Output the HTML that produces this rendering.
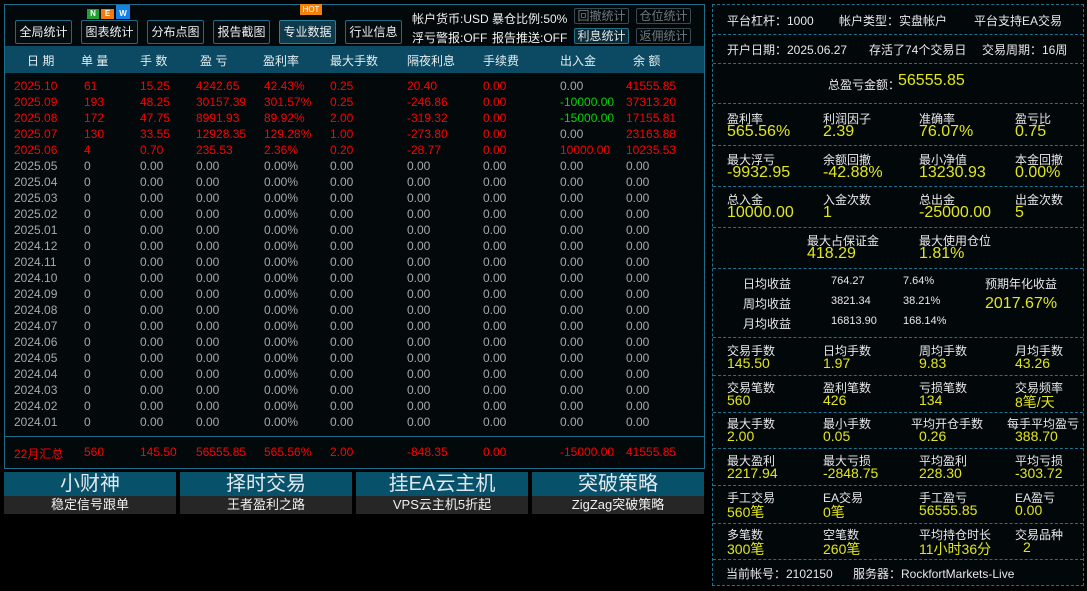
<!DOCTYPE html>
<html><head><meta charset="utf-8"><style>
*{margin:0;padding:0;box-sizing:border-box}
body{width:1087px;height:591px;background:#000;font-family:"Liberation Sans","Noto Sans CJK SC",sans-serif;font-size:12px;color:#c8c8c8;position:relative;overflow:hidden}
.a{position:absolute;white-space:nowrap}
#lp{position:absolute;left:4px;top:4px;width:701px;height:465px;border:1px solid #1c6f8c;background:#03080b}
.btn{position:absolute;top:20px;height:24px;width:57px;border:1px solid #1d6b86;border-radius:2px;color:#f0f0f0;font-size:12px;text-align:center;line-height:22px;background:#050c10}
.sb{position:absolute;height:16px;width:55px;border:1px solid #3a4a52;border-radius:2px;color:#6d7a80;font-size:12px;text-align:center;line-height:14px}
#hd{position:absolute;left:5px;top:46px;width:699px;height:27px;background:#0b4a62}
#hd span{position:absolute;top:6px;color:#e6eef2;font-size:12px}
.r{position:absolute;left:0;height:16px;width:700px;font-size:12px;color:#a9a9a9}
.r span{position:absolute;top:0}
.red{color:#f00 !important}.red span{color:#f00}
.g{color:#00d800 !important}.gy{color:#a9a9a9 !important}
.c0{left:14px}.c1{left:84px}.c2{left:140px}.c3{left:196px}.c4{left:264px}.c5{left:330px}.c6{left:407px}.c7{left:483px}.c8{left:560px}.c9{left:626px}
.bn{position:absolute;top:472px;width:172px;height:42px}
.bn .t{height:24px;background:#07516b;color:#dfe8ec;font-size:20px;text-align:center;line-height:24px}
.bn .b{height:18px;background:#262626;color:#f0f0f0;font-size:13px;text-align:center;line-height:18px}
#rp{position:absolute;left:712px;top:4px;width:372px;height:582px;border:1px dashed #1a7390;background:#02070a}
.ln{position:absolute;left:0;width:370px;border-top:1px dashed #1a7390}
#rp .a{color:#e8e8e8;font-size:12px}
#rp .v{color:#e2e61a;font-size:16px}
</style></head><body>
<div id="lp"></div>
<div class="btn" style="left:15px">全局统计</div>
<div class="btn" style="left:81px">图表统计</div>
<div class="btn" style="left:147px">分布点图</div>
<div class="btn" style="left:213px">报告截图</div>
<div class="btn" style="left:279px;background:#0e3a4c;border-color:#2a7f9c">专业数据</div>
<div class="btn" style="left:345px">行业信息</div>
<div class="a" style="left:87px;top:9px;width:12px;height:10px;background:#22a033;color:#fff;font-size:8px;text-align:center;line-height:10px;font-weight:bold">N</div>
<div class="a" style="left:101px;top:9px;width:13px;height:10px;background:#f07a10;color:#fff;font-size:8px;text-align:center;line-height:10px;font-weight:bold">E</div>
<div class="a" style="left:116px;top:5px;width:14px;height:14px;background:#1580e8;color:#fff;font-size:8px;text-align:center;line-height:18px;font-weight:bold">W</div>
<div class="a" style="left:300px;top:4px;width:22px;height:11px;background:#f0820a;color:#fff;font-size:8px;text-align:center;line-height:11px">HOT</div>
<div class="a" style="left:412px;top:10px;color:#f0f0f0">帐户货币:USD</div>
<div class="a" style="left:492px;top:10px;color:#f0f0f0">暴仓比例:50%</div>
<div class="a" style="left:412px;top:29px;color:#f0f0f0">浮亏警报:OFF</div>
<div class="a" style="left:492px;top:29px;color:#f0f0f0">报告推送:OFF</div>
<div class="sb" style="left:574px;top:8px">回撤统计</div>
<div class="sb" style="left:636px;top:8px">仓位统计</div>
<div class="sb" style="left:574px;top:28px;color:#e0e8ec;border-color:#2a6f88;background:#0a2a36">利息统计</div>
<div class="sb" style="left:636px;top:28px">返佣统计</div>
<div id="hd"><span style="left:22px">日 期</span><span style="left:76px">单 量</span><span style="left:135px">手 数</span><span style="left:195px">盈 亏</span><span style="left:258px">盈利率</span><span style="left:325px">最大手数</span><span style="left:402px">隔夜利息</span><span style="left:478px">手续费</span><span style="left:555px">出入金</span><span style="left:628px">余 额</span></div>

<div class="r red" style="top:79px"><span class="c0">2025.10</span><span class="c1">61</span><span class="c2">15.25</span><span class="c3">4242.65</span><span class="c4">42.43%</span><span class="c5">0.25</span><span class="c6">20.40</span><span class="c7">0.00</span><span class="c8 gy">0.00</span><span class="c9">41555.85</span></div>
<div class="r red" style="top:95px"><span class="c0">2025.09</span><span class="c1">193</span><span class="c2">48.25</span><span class="c3">30157.39</span><span class="c4">301.57%</span><span class="c5">0.25</span><span class="c6">-246.86</span><span class="c7">0.00</span><span class="c8 g">-10000.00</span><span class="c9">37313.20</span></div>
<div class="r red" style="top:111px"><span class="c0">2025.08</span><span class="c1">172</span><span class="c2">47.75</span><span class="c3">8991.93</span><span class="c4">89.92%</span><span class="c5">2.00</span><span class="c6">-319.32</span><span class="c7">0.00</span><span class="c8 g">-15000.00</span><span class="c9">17155.81</span></div>
<div class="r red" style="top:127px"><span class="c0">2025.07</span><span class="c1">130</span><span class="c2">33.55</span><span class="c3">12928.35</span><span class="c4">129.28%</span><span class="c5">1.00</span><span class="c6">-273.80</span><span class="c7">0.00</span><span class="c8 gy">0.00</span><span class="c9">23163.88</span></div>
<div class="r red" style="top:143px"><span class="c0">2025.06</span><span class="c1">4</span><span class="c2">0.70</span><span class="c3">235.53</span><span class="c4">2.36%</span><span class="c5">0.20</span><span class="c6">-28.77</span><span class="c7">0.00</span><span class="c8">10000.00</span><span class="c9">10235.53</span></div>
<div class="r" style="top:159px"><span class="c0">2025.05</span><span class="c1">0</span><span class="c2">0.00</span><span class="c3">0.00</span><span class="c4">0.00%</span><span class="c5">0.00</span><span class="c6">0.00</span><span class="c7">0.00</span><span class="c8">0.00</span><span class="c9">0.00</span></div>
<div class="r" style="top:175px"><span class="c0">2025.04</span><span class="c1">0</span><span class="c2">0.00</span><span class="c3">0.00</span><span class="c4">0.00%</span><span class="c5">0.00</span><span class="c6">0.00</span><span class="c7">0.00</span><span class="c8">0.00</span><span class="c9">0.00</span></div>
<div class="r" style="top:191px"><span class="c0">2025.03</span><span class="c1">0</span><span class="c2">0.00</span><span class="c3">0.00</span><span class="c4">0.00%</span><span class="c5">0.00</span><span class="c6">0.00</span><span class="c7">0.00</span><span class="c8">0.00</span><span class="c9">0.00</span></div>
<div class="r" style="top:207px"><span class="c0">2025.02</span><span class="c1">0</span><span class="c2">0.00</span><span class="c3">0.00</span><span class="c4">0.00%</span><span class="c5">0.00</span><span class="c6">0.00</span><span class="c7">0.00</span><span class="c8">0.00</span><span class="c9">0.00</span></div>
<div class="r" style="top:223px"><span class="c0">2025.01</span><span class="c1">0</span><span class="c2">0.00</span><span class="c3">0.00</span><span class="c4">0.00%</span><span class="c5">0.00</span><span class="c6">0.00</span><span class="c7">0.00</span><span class="c8">0.00</span><span class="c9">0.00</span></div>
<div class="r" style="top:239px"><span class="c0">2024.12</span><span class="c1">0</span><span class="c2">0.00</span><span class="c3">0.00</span><span class="c4">0.00%</span><span class="c5">0.00</span><span class="c6">0.00</span><span class="c7">0.00</span><span class="c8">0.00</span><span class="c9">0.00</span></div>
<div class="r" style="top:255px"><span class="c0">2024.11</span><span class="c1">0</span><span class="c2">0.00</span><span class="c3">0.00</span><span class="c4">0.00%</span><span class="c5">0.00</span><span class="c6">0.00</span><span class="c7">0.00</span><span class="c8">0.00</span><span class="c9">0.00</span></div>
<div class="r" style="top:271px"><span class="c0">2024.10</span><span class="c1">0</span><span class="c2">0.00</span><span class="c3">0.00</span><span class="c4">0.00%</span><span class="c5">0.00</span><span class="c6">0.00</span><span class="c7">0.00</span><span class="c8">0.00</span><span class="c9">0.00</span></div>
<div class="r" style="top:287px"><span class="c0">2024.09</span><span class="c1">0</span><span class="c2">0.00</span><span class="c3">0.00</span><span class="c4">0.00%</span><span class="c5">0.00</span><span class="c6">0.00</span><span class="c7">0.00</span><span class="c8">0.00</span><span class="c9">0.00</span></div>
<div class="r" style="top:303px"><span class="c0">2024.08</span><span class="c1">0</span><span class="c2">0.00</span><span class="c3">0.00</span><span class="c4">0.00%</span><span class="c5">0.00</span><span class="c6">0.00</span><span class="c7">0.00</span><span class="c8">0.00</span><span class="c9">0.00</span></div>
<div class="r" style="top:319px"><span class="c0">2024.07</span><span class="c1">0</span><span class="c2">0.00</span><span class="c3">0.00</span><span class="c4">0.00%</span><span class="c5">0.00</span><span class="c6">0.00</span><span class="c7">0.00</span><span class="c8">0.00</span><span class="c9">0.00</span></div>
<div class="r" style="top:335px"><span class="c0">2024.06</span><span class="c1">0</span><span class="c2">0.00</span><span class="c3">0.00</span><span class="c4">0.00%</span><span class="c5">0.00</span><span class="c6">0.00</span><span class="c7">0.00</span><span class="c8">0.00</span><span class="c9">0.00</span></div>
<div class="r" style="top:351px"><span class="c0">2024.05</span><span class="c1">0</span><span class="c2">0.00</span><span class="c3">0.00</span><span class="c4">0.00%</span><span class="c5">0.00</span><span class="c6">0.00</span><span class="c7">0.00</span><span class="c8">0.00</span><span class="c9">0.00</span></div>
<div class="r" style="top:367px"><span class="c0">2024.04</span><span class="c1">0</span><span class="c2">0.00</span><span class="c3">0.00</span><span class="c4">0.00%</span><span class="c5">0.00</span><span class="c6">0.00</span><span class="c7">0.00</span><span class="c8">0.00</span><span class="c9">0.00</span></div>
<div class="r" style="top:383px"><span class="c0">2024.03</span><span class="c1">0</span><span class="c2">0.00</span><span class="c3">0.00</span><span class="c4">0.00%</span><span class="c5">0.00</span><span class="c6">0.00</span><span class="c7">0.00</span><span class="c8">0.00</span><span class="c9">0.00</span></div>
<div class="r" style="top:399px"><span class="c0">2024.02</span><span class="c1">0</span><span class="c2">0.00</span><span class="c3">0.00</span><span class="c4">0.00%</span><span class="c5">0.00</span><span class="c6">0.00</span><span class="c7">0.00</span><span class="c8">0.00</span><span class="c9">0.00</span></div>
<div class="r" style="top:415px"><span class="c0">2024.01</span><span class="c1">0</span><span class="c2">0.00</span><span class="c3">0.00</span><span class="c4">0.00%</span><span class="c5">0.00</span><span class="c6">0.00</span><span class="c7">0.00</span><span class="c8">0.00</span><span class="c9">0.00</span></div>
<div class="a" style="left:5px;top:436px;width:699px;border-top:1px solid #1c6f8c"></div>
<div class="r red" style="top:445px"><span class="c0">22月汇总</span><span class="c1">560</span><span class="c2">145.50</span><span class="c3">56555.85</span><span class="c4">565.56%</span><span class="c5">2.00</span><span class="c6">-848.35</span><span class="c7">0.00</span><span class="c8">-15000.00</span><span class="c9">41555.85</span></div>

<div class="bn" style="left:4px"><div class="t">小财神</div><div class="b">稳定信号跟单</div></div>
<div class="bn" style="left:180px"><div class="t">择时交易</div><div class="b">王者盈利之路</div></div>
<div class="bn" style="left:356px"><div class="t">挂EA云主机</div><div class="b">VPS云主机5折起</div></div>
<div class="bn" style="left:532px"><div class="t">突破策略</div><div class="b">ZigZag突破策略</div></div>

<div id="rp">
<div class="ln" style="top:29px"></div><div class="ln" style="top:58px"></div><div class="ln" style="top:98px"></div><div class="ln" style="top:140px"></div><div class="ln" style="top:181px"></div><div class="ln" style="top:222px"></div><div class="ln" style="top:263px"></div><div class="ln" style="top:332px"></div><div class="ln" style="top:370px"></div><div class="ln" style="top:407px"></div><div class="ln" style="top:443px"></div><div class="ln" style="top:480px"></div><div class="ln" style="top:518px"></div><div class="ln" style="top:554px"></div>
<div class="a" style="left:14px;top:7px">平台杠杆：1000</div><div class="a" style="left:126px;top:7px">帐户类型：实盘帐户</div><div class="a" style="left:261px;top:7px">平台支持EA交易</div>
<div class="a" style="left:14px;top:36px">开户日期：2025.06.27</div><div class="a" style="left:156px;top:36px">存活了74个交易日</div><div class="a" style="left:269px;top:36px">交易周期：16周</div>
<div class="a" style="left:115px;top:71px">总盈亏金额：</div><div class="a v" style="left:185px;top:67px">56555.85</div>
<div class="a" style="left:14px;top:105px">盈利率</div><div class="a" style="left:110px;top:105px">利润因子</div><div class="a" style="left:206px;top:105px">准确率</div><div class="a" style="left:302px;top:105px">盈亏比</div>
<div class="a v" style="left:14px;top:118px">565.56%</div><div class="a v" style="left:110px;top:118px">2.39</div><div class="a v" style="left:206px;top:118px">76.07%</div><div class="a v" style="left:302px;top:118px">0.75</div>
<div class="a" style="left:14px;top:146px">最大浮亏</div><div class="a" style="left:110px;top:146px">余额回撤</div><div class="a" style="left:206px;top:146px">最小净值</div><div class="a" style="left:302px;top:146px">本金回撤</div>
<div class="a v" style="left:14px;top:159px">-9932.95</div><div class="a v" style="left:110px;top:159px">-42.88%</div><div class="a v" style="left:206px;top:159px">13230.93</div><div class="a v" style="left:302px;top:159px">0.00%</div>
<div class="a" style="left:14px;top:186px">总入金</div><div class="a" style="left:110px;top:186px">入金次数</div><div class="a" style="left:206px;top:186px">总出金</div><div class="a" style="left:302px;top:186px">出金次数</div>
<div class="a v" style="left:14px;top:199px">10000.00</div><div class="a v" style="left:110px;top:199px">1</div><div class="a v" style="left:206px;top:199px">-25000.00</div><div class="a v" style="left:302px;top:199px">5</div>
<div class="a" style="left:94px;top:227px">最大占保证金</div><div class="a" style="left:206px;top:227px">最大使用仓位</div>
<div class="a v" style="left:94px;top:240px">418.29</div><div class="a v" style="left:206px;top:240px">1.81%</div>
<div class="a" style="left:30px;top:270px">日均收益</div><div class="a" style="left:118px;top:270px;font-size:11px">764.27</div><div class="a" style="left:190px;top:270px;font-size:11px">7.64%</div>
<div class="a" style="left:30px;top:290px">周均收益</div><div class="a" style="left:118px;top:290px;font-size:11px">3821.34</div><div class="a" style="left:190px;top:290px;font-size:11px">38.21%</div>
<div class="a" style="left:30px;top:310px">月均收益</div><div class="a" style="left:118px;top:310px;font-size:11px">16813.90</div><div class="a" style="left:190px;top:310px;font-size:11px">168.14%</div>
<div class="a" style="left:272px;top:270px">预期年化收益</div><div class="a v" style="left:272px;top:290px">2017.67%</div>
<div class="a" style="left:14px;top:337px">交易手数</div><div class="a" style="left:110px;top:337px">日均手数</div><div class="a" style="left:206px;top:337px">周均手数</div><div class="a" style="left:302px;top:337px">月均手数</div>
<div class="a v" style="left:14px;top:350px;font-size:14px">145.50</div><div class="a v" style="left:110px;top:350px;font-size:14px">1.97</div><div class="a v" style="left:206px;top:350px;font-size:14px">9.83</div><div class="a v" style="left:302px;top:350px;font-size:14px">43.26</div>
<div class="a" style="left:14px;top:374px">交易笔数</div><div class="a" style="left:110px;top:374px">盈利笔数</div><div class="a" style="left:206px;top:374px">亏损笔数</div><div class="a" style="left:302px;top:374px">交易频率</div>
<div class="a v" style="left:14px;top:387px;font-size:14px">560</div><div class="a v" style="left:110px;top:387px;font-size:14px">426</div><div class="a v" style="left:206px;top:387px;font-size:14px">134</div><div class="a v" style="left:302px;top:387px;font-size:14px">8笔/天</div>
<div class="a" style="left:14px;top:410px">最大手数</div><div class="a" style="left:110px;top:410px">最小手数</div><div class="a" style="left:198px;top:410px">平均开仓手数</div><div class="a" style="left:294px;top:410px">每手平均盈亏</div>
<div class="a v" style="left:14px;top:423px;font-size:14px">2.00</div><div class="a v" style="left:110px;top:423px;font-size:14px">0.05</div><div class="a v" style="left:206px;top:423px;font-size:14px">0.26</div><div class="a v" style="left:302px;top:423px;font-size:14px">388.70</div>
<div class="a" style="left:14px;top:447px">最大盈利</div><div class="a" style="left:110px;top:447px">最大亏损</div><div class="a" style="left:206px;top:447px">平均盈利</div><div class="a" style="left:302px;top:447px">平均亏损</div>
<div class="a v" style="left:14px;top:460px;font-size:14px">2217.94</div><div class="a v" style="left:110px;top:460px;font-size:14px">-2848.75</div><div class="a v" style="left:206px;top:460px;font-size:14px">228.30</div><div class="a v" style="left:302px;top:460px;font-size:14px">-303.72</div>
<div class="a" style="left:14px;top:484px">手工交易</div><div class="a" style="left:110px;top:484px">EA交易</div><div class="a" style="left:206px;top:484px">手工盈亏</div><div class="a" style="left:302px;top:484px">EA盈亏</div>
<div class="a v" style="left:14px;top:497px;font-size:14px">560笔</div><div class="a v" style="left:110px;top:497px;font-size:14px">0笔</div><div class="a v" style="left:206px;top:497px;font-size:14px">56555.85</div><div class="a v" style="left:302px;top:497px;font-size:14px">0.00</div>
<div class="a" style="left:14px;top:521px">多笔数</div><div class="a" style="left:110px;top:521px">空笔数</div><div class="a" style="left:206px;top:521px">平均持仓时长</div><div class="a" style="left:302px;top:521px">交易品种</div>
<div class="a v" style="left:14px;top:534px;font-size:14px">300笔</div><div class="a v" style="left:110px;top:534px;font-size:14px">260笔</div><div class="a v" style="left:206px;top:534px;font-size:14px">11小时36分</div><div class="a v" style="left:310px;top:534px;font-size:14px">2</div>
<div class="a" style="left:13px;top:560px">当前帐号：2102150</div><div class="a" style="left:140px;top:560px">服务器：RockfortMarkets-Live</div>
</div>
</body></html>
